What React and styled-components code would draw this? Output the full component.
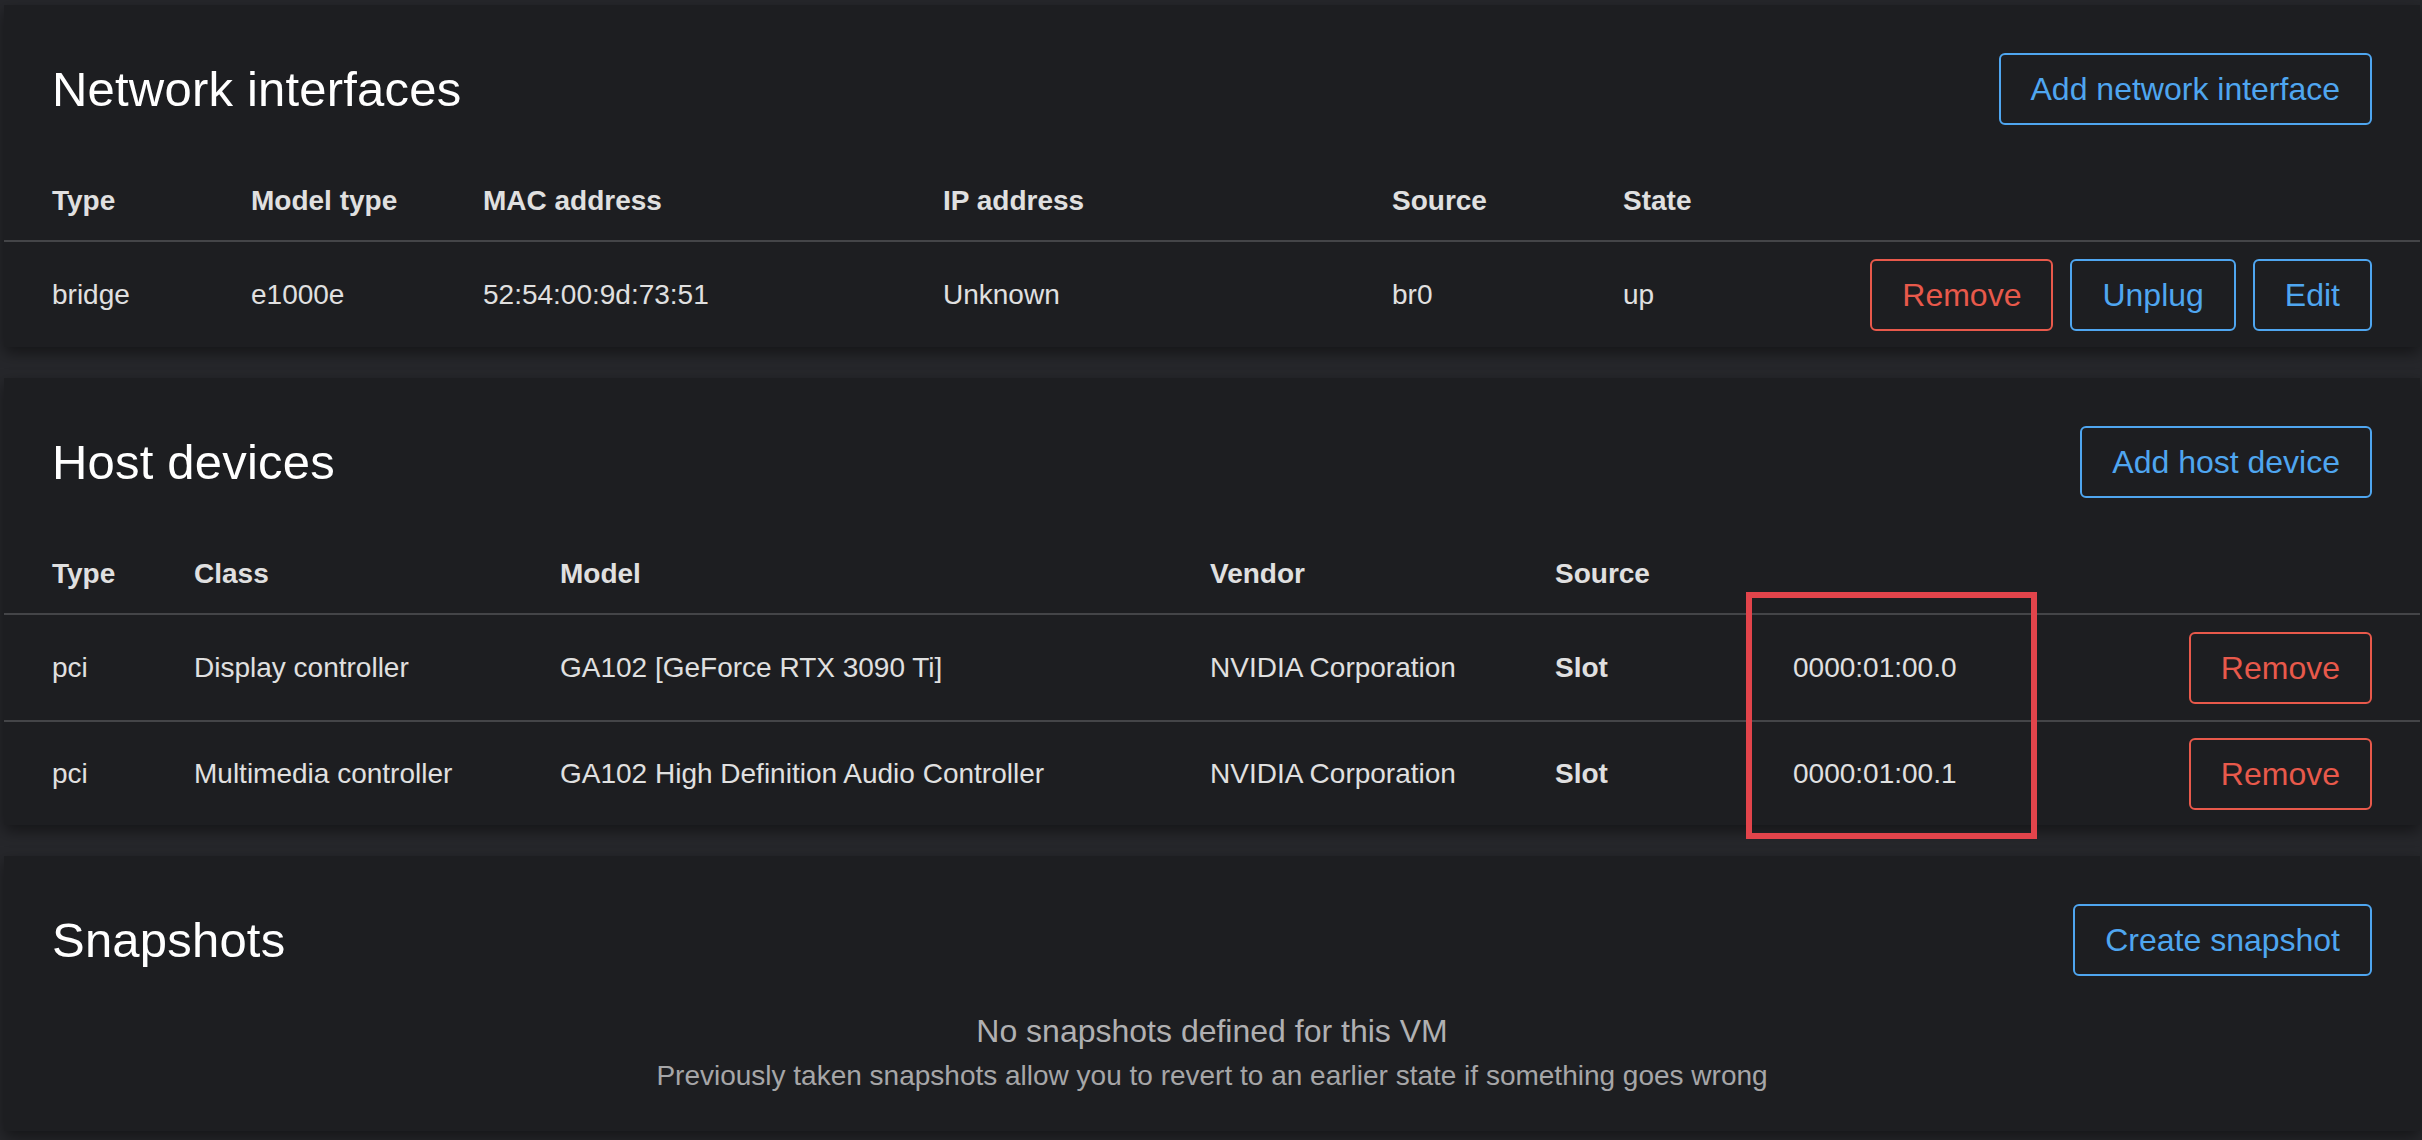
import React from "react";
import styled, { createGlobalStyle } from "styled-components";

const GlobalStyle = createGlobalStyle`
  html, body {
    margin: 0;
    padding: 0;
    background: #26272b;
  }
  body {
    font-family: "Liberation Sans", Arial, sans-serif;
    color: #e0e0e0;
  }
`;

const Page = styled.main`
  display: flex;
  flex-direction: column;
  gap: 31px;
  padding: 5px 2px 10px 4px;
  min-height: 1140px;
  box-sizing: border-box;
`;

const Card = styled.section`
  position: relative;
  background: #1d1e21;
  box-shadow: 0 6px 14px rgba(0, 0, 0, 0.45);
`;

const CardHeader = styled.header`
  display: flex;
  align-items: center;
  justify-content: space-between;
  padding: 48px 48px 0;
`;

const CardTitle = styled.h2`
  margin: 0;
  font-size: 49px;
  font-weight: 400;
  line-height: 1.2;
  letter-spacing: 0.2px;
  color: #ffffff;
`;

const Button = styled.button`
  height: 72px;
  padding: 0 30px;
  border: 2px solid ${(p) => (p.$danger ? "#e8594b" : "#4fa6f0")};
  border-radius: 6px;
  background: transparent;
  color: ${(p) => (p.$danger ? "#e8594b" : "#4fa6f0")};
  font-family: inherit;
  font-size: 32px;
  line-height: 1.5;
  white-space: nowrap;
  cursor: pointer;
`;

const HeadRow = styled.div`
  display: grid;
  grid-template-columns: ${(p) => p.$cols};
  align-items: center;
  padding: 55px 48px 18px;
  border-bottom: 2px solid #444548;
  font-size: 28px;
  font-weight: 700;
  line-height: 42px;
  color: #e0e0e0;
`;

const Row = styled.div`
  display: grid;
  grid-template-columns: ${(p) => p.$cols};
  align-items: center;
  min-height: 105px;
  box-sizing: border-box;
  padding: 0 48px;
  font-size: 28px;
  line-height: 42px;
  color: #e0e0e0;

  & + & {
    border-top: 2px solid #444548;
  }
`;

const Cell = styled.div`
  white-space: nowrap;
  ${(p) => p.$bold && "font-weight: 700;"}
`;

const Actions = styled.div`
  display: flex;
  justify-content: flex-end;
  gap: 17px;
`;

const EmptyState = styled.div`
  padding: 35px 48px 34px;
  text-align: center;
`;

const EmptyTitle = styled.h3`
  margin: 0 0 2px;
  font-size: 32px;
  font-weight: 400;
  line-height: 1.3;
  color: #b0b0b2;
`;

const EmptyBody = styled.p`
  margin: 0;
  font-size: 28px;
  line-height: 42px;
  color: #a6a6a8;
`;

// red annotation drawn over the slot addresses
const Highlight = styled.div`
  position: absolute;
  top: 214px;
  left: 1742px;
  width: 291px;
  height: 247px;
  box-sizing: border-box;
  border: 6px solid #e2444b;
  pointer-events: none;
`;

const nicCols = "199px 232px 460px 449px 231px 1fr auto";
const hostCols = "142px 366px 650px 345px 238px 1fr auto";

const nics = [
  { type: "bridge", model: "e1000e", mac: "52:54:00:9d:73:51", ip: "Unknown", source: "br0", state: "up" },
];

const hostDevices = [
  { type: "pci", cls: "Display controller", model: "GA102 [GeForce RTX 3090 Ti]", vendor: "NVIDIA Corporation", slot: "0000:01:00.0" },
  { type: "pci", cls: "Multimedia controller", model: "GA102 High Definition Audio Controller", vendor: "NVIDIA Corporation", slot: "0000:01:00.1" },
];

const App = () => {
  return (
    <>
      <GlobalStyle />
      <Page>
        <Card>
          <CardHeader>
            <CardTitle>Network interfaces</CardTitle>
            <Button>Add network interface</Button>
          </CardHeader>
          <HeadRow $cols={nicCols}>
            <Cell>Type</Cell>
            <Cell>Model type</Cell>
            <Cell>MAC address</Cell>
            <Cell>IP address</Cell>
            <Cell>Source</Cell>
            <Cell>State</Cell>
            <Cell />
          </HeadRow>
          {nics.map((n) => (
            <Row key={n.mac} $cols={nicCols}>
              <Cell>{n.type}</Cell>
              <Cell>{n.model}</Cell>
              <Cell>{n.mac}</Cell>
              <Cell>{n.ip}</Cell>
              <Cell>{n.source}</Cell>
              <Cell>{n.state}</Cell>
              <Actions>
                <Button $danger>Remove</Button>
                <Button>Unplug</Button>
                <Button>Edit</Button>
              </Actions>
            </Row>
          ))}
        </Card>

        <Card>
          <CardHeader>
            <CardTitle>Host devices</CardTitle>
            <Button>Add host device</Button>
          </CardHeader>
          <HeadRow $cols={hostCols}>
            <Cell>Type</Cell>
            <Cell>Class</Cell>
            <Cell>Model</Cell>
            <Cell>Vendor</Cell>
            <Cell>Source</Cell>
            <Cell />
            <Cell />
          </HeadRow>
          {hostDevices.map((d) => (
            <Row key={d.slot} $cols={hostCols}>
              <Cell>{d.type}</Cell>
              <Cell>{d.cls}</Cell>
              <Cell>{d.model}</Cell>
              <Cell>{d.vendor}</Cell>
              <Cell $bold>Slot</Cell>
              <Cell>{d.slot}</Cell>
              <Actions>
                <Button $danger>Remove</Button>
              </Actions>
            </Row>
          ))}
          <Highlight />
        </Card>

        <Card>
          <CardHeader>
            <CardTitle>Snapshots</CardTitle>
            <Button>Create snapshot</Button>
          </CardHeader>
          <EmptyState>
            <EmptyTitle>No snapshots defined for this VM</EmptyTitle>
            <EmptyBody>
              Previously taken snapshots allow you to revert to an earlier state if something goes wrong
            </EmptyBody>
          </EmptyState>
        </Card>
      </Page>
    </>
  );
};

export default App;
